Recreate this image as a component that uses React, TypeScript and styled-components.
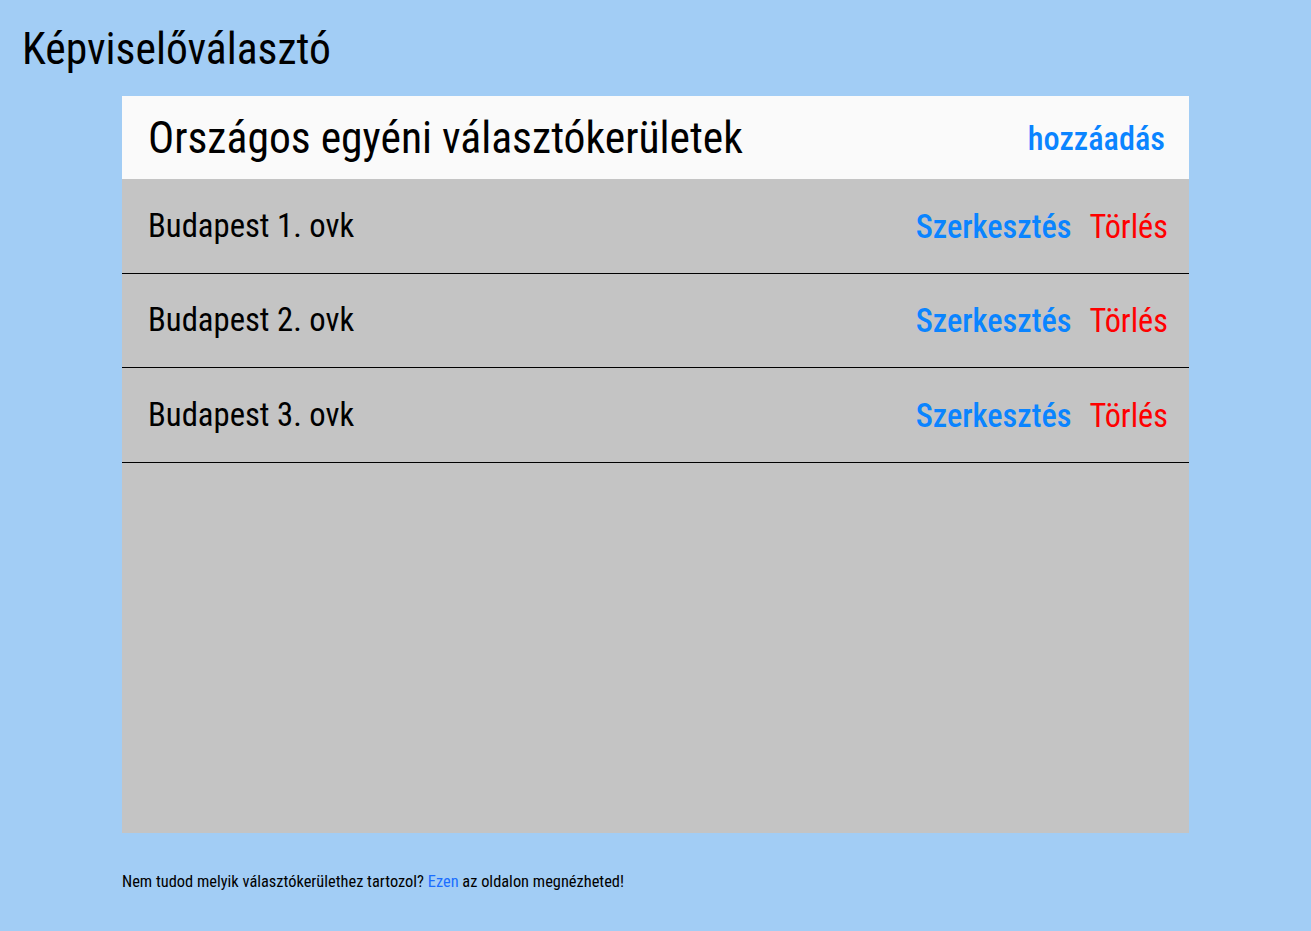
import React from "react";
import styled, { createGlobalStyle } from "styled-components";

const GlobalStyle = createGlobalStyle`
  html, body {
    margin: 0;
    padding: 0;
    background: #a2cdf5;
    font-family: "Roboto Condensed", Roboto, "Liberation Sans", sans-serif;
    color: #000;
  }
`;

const Page = styled.div`
  display: flex;
  flex-direction: column;
  min-height: 931px;
  box-sizing: border-box;
  padding-top: 25px;
`;

const AppTitle = styled.h1`
  margin: 0 0 21px 22px;
  font-size: 43.6px;
  font-weight: 400;
  line-height: 50px;
`;

const Card = styled.section`
  margin: 0 122px;
  height: 737px;
  background: #c4c4c4;
  display: flex;
  flex-direction: column;
`;

const CardHeader = styled.header`
  height: 83px;
  flex-shrink: 0;
  background: #fafafa;
  display: flex;
  align-items: center;
  justify-content: space-between;
  padding: 2px 24px 0 26px;
  box-sizing: border-box;
`;

const CardTitle = styled.h2`
  margin: 0;
  font-size: 43.6px;
  font-weight: 400;
  line-height: 52px;
`;

const ActionLink = styled.a<{ $tone: "blue" | "red"; $bold?: boolean }>`
  font-size: 32.3px;
  line-height: 38px;
  font-weight: ${(p) => (p.$bold ? 500 : 400)};
  color: ${(p) => (p.$tone === "blue" ? "#0a84ff" : "#ff0000")};
  text-decoration: none;
  cursor: pointer;
`;

const List = styled.ul`
  list-style: none;
  margin: 0;
  padding: 0;
`;

const Row = styled.li`
  height: 93.5px;
  border-bottom: 1px solid #000;
  display: flex;
  align-items: center;
  justify-content: space-between;
  padding: 0 21px 0 26px;
`;

const RowName = styled.span`
  font-size: 32.7px;
  line-height: 38px;
`;

const Actions = styled.div`
  display: flex;
  align-items: center;
  gap: 18px;
  padding-top: 2px;
`;

const Footer = styled.p`
  margin: 39px 122px 0;
  font-size: 16.4px;
  line-height: 19px;
`;

const FooterLink = styled.a`
  color: #1a6dff;
  text-decoration: none;
`;

const districts = ["Budapest 1. ovk", "Budapest 2. ovk", "Budapest 3. ovk"];

export default function App() {
  return (
    <Page>
      <GlobalStyle />
      <AppTitle>Képviselőválasztó</AppTitle>
      <Card>
        <CardHeader>
          <CardTitle>Országos egyéni választókerületek</CardTitle>
          <ActionLink $tone="blue" $bold>hozzáadás</ActionLink>
        </CardHeader>
        <List>
          {districts.map((d) => (
            <Row key={d}>
              <RowName>{d}</RowName>
              <Actions>
                <ActionLink $tone="blue" $bold>Szerkesztés</ActionLink>
                <ActionLink $tone="red">Törlés</ActionLink>
              </Actions>
            </Row>
          ))}
        </List>
      </Card>
      <Footer>
        Nem tudod melyik választókerülethez tartozol? <FooterLink>Ezen</FooterLink> az oldalon megnézheted!
      </Footer>
    </Page>
  );
}
